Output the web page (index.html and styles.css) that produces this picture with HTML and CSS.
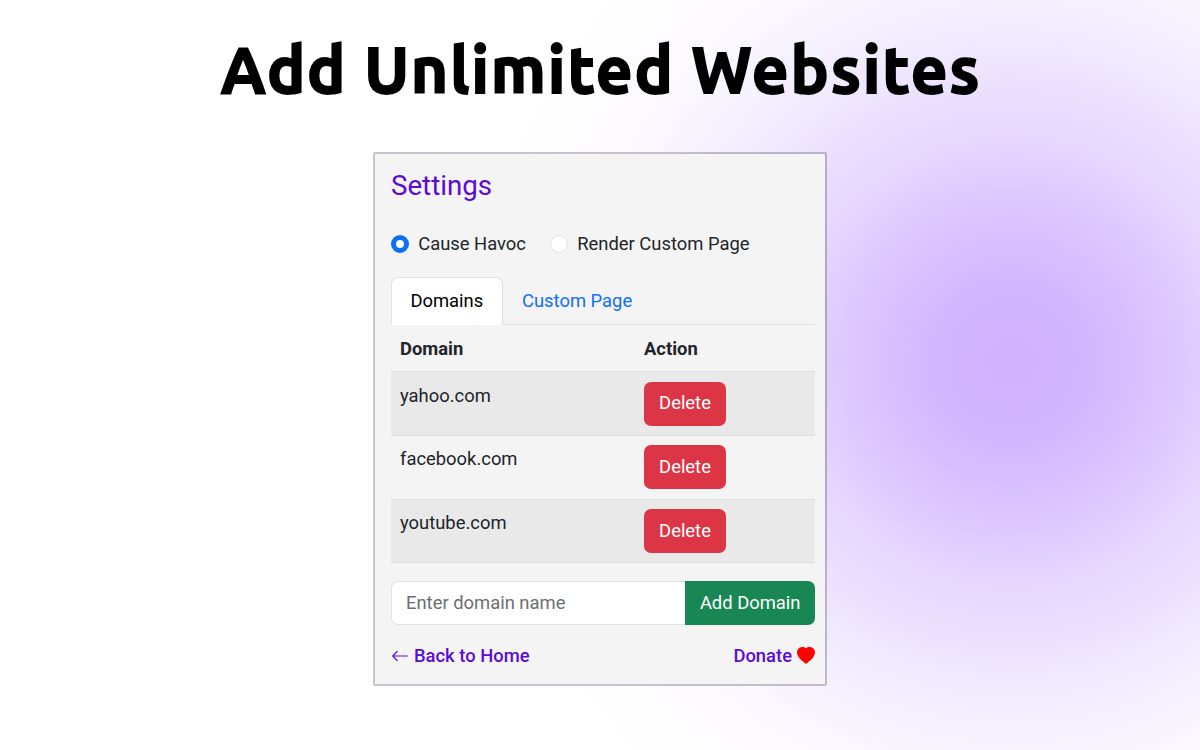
FILE: index.html
```html
<!DOCTYPE html>
<html lang="en">
<head>
    <meta charset="UTF-8">
    <meta name="viewport" content="width=device-width, initial-scale=1.0">
    <title>Add Unlimited Websites</title>
    <link rel="stylesheet" href="styles.css">
</head>
<body>
    <h1 class="headline">Add Unlimited Websites</h1>

    <div class="popup">
        <h2 class="popup-title">Settings</h2>

        <div class="modes">
            <label class="mode"><input type="radio" name="mode" class="radio" checked>Cause Havoc</label>
            <label class="mode"><input type="radio" name="mode" class="radio">Render Custom Page</label>
        </div>

        <div class="tabs">
            <a class="tab active">Domains</a>
            <a class="tab">Custom Page</a>
        </div>

        <table class="domains">
            <thead>
                <tr><th class="col-domain">Domain</th><th>Action</th></tr>
            </thead>
            <tbody>
                <tr><td>yahoo.com</td><td><button class="btn btn-danger">Delete</button></td></tr>
                <tr><td>facebook.com</td><td><button class="btn btn-danger">Delete</button></td></tr>
                <tr><td>youtube.com</td><td><button class="btn btn-danger">Delete</button></td></tr>
            </tbody>
        </table>

        <div class="add-domain">
            <input type="text" class="domain-input" placeholder="Enter domain name">
            <button class="btn btn-success">Add Domain</button>
        </div>

        <div class="footer">
            <a class="link">
                <svg class="arrow" viewBox="0 0 16 16"><path fill="currentColor" fill-rule="evenodd" d="M15 8a.5.5 0 0 0-.5-.5H2.707l3.147-3.146a.5.5 0 1 0-.708-.708l-4 4a.5.5 0 0 0 0 .708l4 4a.5.5 0 0 0 .708-.708L2.707 8.5H14.5A.5.5 0 0 0 15 8z"/></svg>
                Back to Home
            </a>
            <a class="link">
                Donate
                <svg class="heart" viewBox="0 0 16 16"><path fill="red" fill-rule="evenodd" d="M8 1.314C12.438-3.248 23.534 4.735 8 15-7.534 4.736 3.562-3.248 8 1.314z"/></svg>
            </a>
        </div>
    </div>
</body>
</html>
```

FILE: styles.css
```css
* {
    box-sizing: border-box;
}
body {
    margin: 0;
    height: 750px;
    overflow: hidden;
    display: flex;
    flex-direction: column;
    align-items: center;
    font-family: Roboto, "Liberation Sans", sans-serif;
    font-size: 18.4px;
    line-height: 27.5px;
    color: #212529;
    background: radial-gradient(circle at 1012px 362px, #d0b1ff 0, #d2b5ff 65px, #d8beff 120px, #e0ccff 180px, #e6d7ff 225px, #ebdffe 270px, #f0e8fe 315px, #f6f1ff 370px, #fbf8ff 425px, #fefdff 500px, #fff 560px);
}
.headline {
    margin: 0;
    height: 152px;
    padding: 24px 0 0 2px;
    font-family: Ubuntu, "Noto Sans", sans-serif;
    font-size: 64px;
    font-weight: 700;
    line-height: 90px;
    letter-spacing: 1.8px;
    white-space: nowrap;
    color: #000;
    -webkit-text-stroke: 1.8px #000;
}
.popup {
    width: 454px;
    height: 534px;
    padding: 15px 10px 0 16px;
    border: 2px solid rgba(70, 60, 90, 0.3);
    border-radius: 2px;
    background: #f4f4f4;
    background-clip: padding-box;
}
.popup-title {
    margin: 0 0 27px;
    font-size: 27.7px;
    font-weight: 400;
    line-height: 34px;
    color: #5b0bd6;
}
.modes {
    display: flex;
    gap: 24px;
    height: 28px;
}
.mode {
    display: flex;
    align-items: center;
    gap: 9.2px;
}
.radio {
    appearance: none;
    width: 18px;
    height: 18px;
    margin: 0;
    border: 1px solid #dee2e6;
    border-radius: 50%;
    background: #fff;
}
.radio:checked {
    border: 5px solid #0d6efd;
}
.tabs {
    display: flex;
    height: 48px;
    margin-top: 19px;
    border-bottom: 1px solid #dcdfe2;
}
.tab {
    height: 48px;
    padding: 9px 18.4px 8px;
    border: 1px solid transparent;
    border-radius: 7px 7px 0 0;
    color: #0d6efd;
}
.tab.active {
    border-color: #dee2e6 #dee2e6 #fff;
    background: #fff;
    color: #000;
}
.domains {
    width: 100%;
    border-collapse: separate;
    border-spacing: 0;
}
.domains th,
.domains td {
    padding: 9.5px 9px 9.2px;
    border-bottom: 1px solid #dcdfe2;
    text-align: left;
    vertical-align: top;
}
.domains .col-domain {
    width: 244px;
}
.domains tbody tr:nth-child(odd) {
    background: #e9e9e9;
}
.btn {
    display: block;
    height: 44px;
    padding: 0 14.5px 1px;
    border: 0;
    border-radius: 7px;
    font: inherit;
    color: #fff;
}
.btn-danger {
    width: 82px;
    background: #dc3545;
}
.btn-success {
    border-radius: 0 7px 7px 0;
    background: #198754;
}
.add-domain {
    display: flex;
    margin-top: 18px;
}
.domain-input {
    flex: 1;
    min-width: 0;
    height: 44px;
    padding: 0 14px 1px;
    border: 1px solid #dee2e6;
    border-right: 0;
    border-radius: 7px 0 0 7px;
    background: #fff;
    font: inherit;
}
.domain-input::placeholder {
    color: #6c6f72;
}
.footer {
    display: flex;
    justify-content: space-between;
    margin-top: 17px;
}
.link {
    display: flex;
    align-items: center;
    gap: 5px;
    font-weight: 500;
    color: #5b0bd6;
}
.arrow,
.heart {
    width: 18px;
    height: 18px;
}
```
